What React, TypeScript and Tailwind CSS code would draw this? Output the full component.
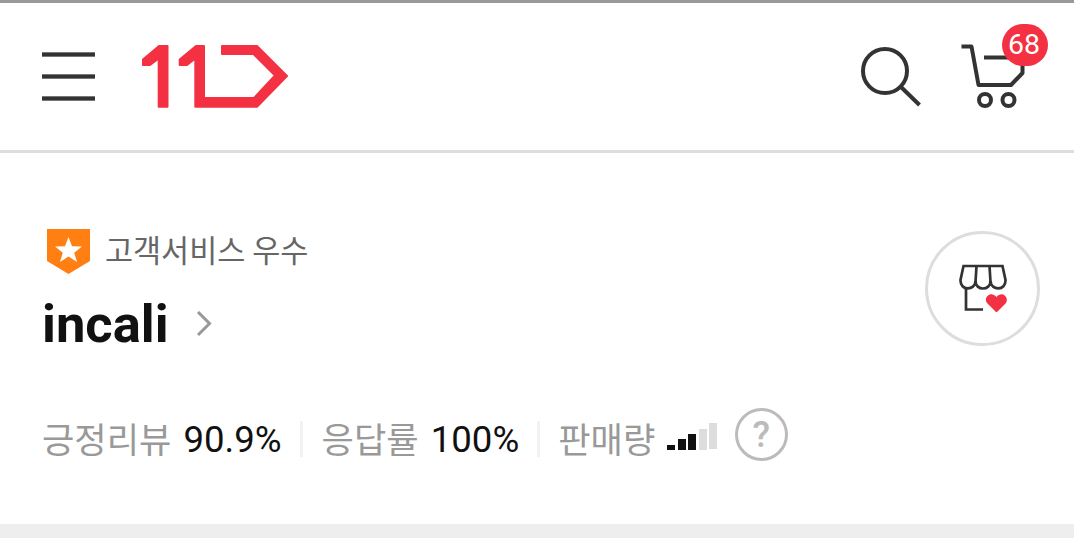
const bars = [
  { id: 1, cls: 'h-[5px] w-2 bg-[#111]' },
  { id: 2, cls: 'ml-[3px] h-[11px] w-2 bg-[#111]' },
  { id: 3, cls: 'ml-[2px] h-4 w-2 bg-[#111]' },
  { id: 4, cls: 'ml-[3px] h-[21px] w-2 bg-[#ddd]' },
  { id: 5, cls: 'ml-[2px] mb-px h-[26px] w-2 bg-[#ddd]' },
]

function Logo() {
  return (
    <svg className="ml-[46px] h-16 w-[148px]" viewBox="0 0 148 64" aria-label="11st">
      <g fill="#f43142" stroke="#f43142" strokeWidth="2" strokeLinejoin="round">
        <path d="M2 15.500 18 2H26.500V62.700H17.700V14.500L9 21H2Z" />
        <path d="M38.700 15.500 55 2H63V54H113L134 31.500 112.500 10H81V2H116L146 32 116 62.700H54.300V14.500L46 21H38.700Z" />
      </g>
    </svg>
  )
}

function Header() {
  return (
    <header className="flex h-[153px] items-start border-t-[3px] border-b-[3px] border-t-[#999] border-b-[#ddd] pt-[41px] pl-[42px]">
      <button className="mt-2 flex flex-col gap-[17px]" aria-label="menu">
        <span className="h-[5px] w-[53px] border-y border-[#777] bg-[#333]" />
        <span className="h-[5px] w-[53px] border-y border-[#777] bg-[#333]" />
        <span className="h-[5px] w-[53px] border-y border-[#777] bg-[#333]" />
      </button>
      <Logo />
      <svg className="mt-[3px] ml-[572px] h-[60px] w-[60px]" viewBox="0 0 60 60" fill="none" stroke="#333" strokeWidth="4">
        <circle cx="24" cy="24" r="22" />
        <path d="M39.500 39.500 58.500 58" />
      </svg>
      <div className="relative ml-[40px]">
        <svg className="h-[66px] w-[66px]" viewBox="0 0 66 66" fill="none" stroke="#333" strokeWidth="4">
          <path d="M.5 2.500H10.500L17.500 41H50L61.500 29V13.500H23" strokeLinejoin="round" />
          <circle cx="24" cy="56" r="6" />
          <circle cx="47.500" cy="56" r="6" />
        </svg>
        <span className="absolute -top-5 left-[41px] flex h-[42px] w-[46px] items-center justify-center rounded-full bg-[#f43142] pr-[2px] font-['Roboto',sans-serif] text-[28.5px] leading-none text-white">
          68
        </span>
      </div>
    </header>
  )
}

function Stat({ label, value }: { label: string; value: string }) {
  return (
    <>
      <span className="pb-px text-[#999]">{label}</span>
      <span className="ml-[12px] pt-[3px] font-['Roboto',sans-serif] text-[36.6px] text-[#111]">{value}</span>
    </>
  )
}

export default function App() {
  return (
    <div className="flex h-[538px] w-[1074px] flex-col overflow-hidden bg-white font-['Noto_Sans_CJK_KR',sans-serif]">
      <Header />

      <main className="flex-1 pl-[42px]">
        <div className="flex justify-between">
          <div className="pt-[76px]">
            <div className="flex h-[45px] items-center">
              <svg className="ml-[5px] h-[45px] w-[43px]" viewBox="0 0 43 45">
                <path d="M0 0H43V32L21.5 45 0 32Z" fill="#ff7f12" />
                <path d="M21.5 8 25 17.2 35 17.5 27.2 23.7 30 33 21.5 27.6 13 33 15.8 23.7 8 17.5 18 17.2Z" fill="#fff" />
              </svg>
              <span className="mb-[5px] ml-[15px] text-[30.5px] leading-[40px] text-[#666]">고객서비스 우수</span>
            </div>
            <h1 className="flex h-[100px] items-center font-['Roboto',sans-serif] text-[52.5px] leading-[100px] font-bold text-[#111]">
              incali
              <svg className="ml-[27px] h-[26px] w-[17px]" viewBox="0 0 17 26" fill="none" stroke="#999" strokeWidth="3">
                <path d="M2 1 13.500 12.500 2 24" />
              </svg>
            </h1>
          </div>

          {/* favourite store */}
          <button className="mt-[78px] mr-[34px] flex size-[115px] items-center justify-center rounded-full border-[3px] border-[#ddd] pb-[2px]">
            <svg className="h-12 w-12" viewBox="0 0 48 48" fill="none">
              <g stroke="#333" strokeWidth="2.7">
                <path d="M4.500 2H43.500L46.500 16C47 27 32 27 31.500 17C31.500 27 16.500 27 16.500 17C16 27 1 27 1.500 16Z" />
                <path d="M17.500 2 16.500 18M30.500 2 31.500 18M7 24V45.500H24" />
              </g>
              <path d="M37.500 48.500 28.500 39.500C23.500 34 31.500 26 37.500 33C43 26 51 34 46.500 39.500Z" fill="#f43142" />
            </svg>
          </button>
        </div>

        <div className="mt-[35px] flex h-[58px] items-center text-[35.2px] leading-[58px]">
          <Stat label="긍정리뷰" value="90.9%" />
          <span className="mt-[2px] mr-[19px] ml-[18px] h-9 w-[3px] bg-[#f2f2f2]" />
          <Stat label="응답률" value="100%" />
          <span className="mt-[2px] mr-[18px] ml-[18px] h-9 w-[3px] bg-[#f2f2f2]" />
          <span className="pb-px text-[#999]">판매량</span>
          <span className="mb-[3px] ml-[12px] flex h-[27px] items-end">
            {bars.map((bar) => (
              <i key={bar.id} className={bar.cls} />
            ))}
          </span>
          <button className="mb-[8px] ml-[18px] flex size-[53px] items-center justify-center rounded-full border-[3px] border-[#bbb] pt-px pr-px font-['Roboto',sans-serif] text-[36px] leading-none font-medium text-[#bbb]">
            ?
          </button>
        </div>
      </main>

      <div className="h-[14px] bg-[#eee]" />
    </div>
  )
}
